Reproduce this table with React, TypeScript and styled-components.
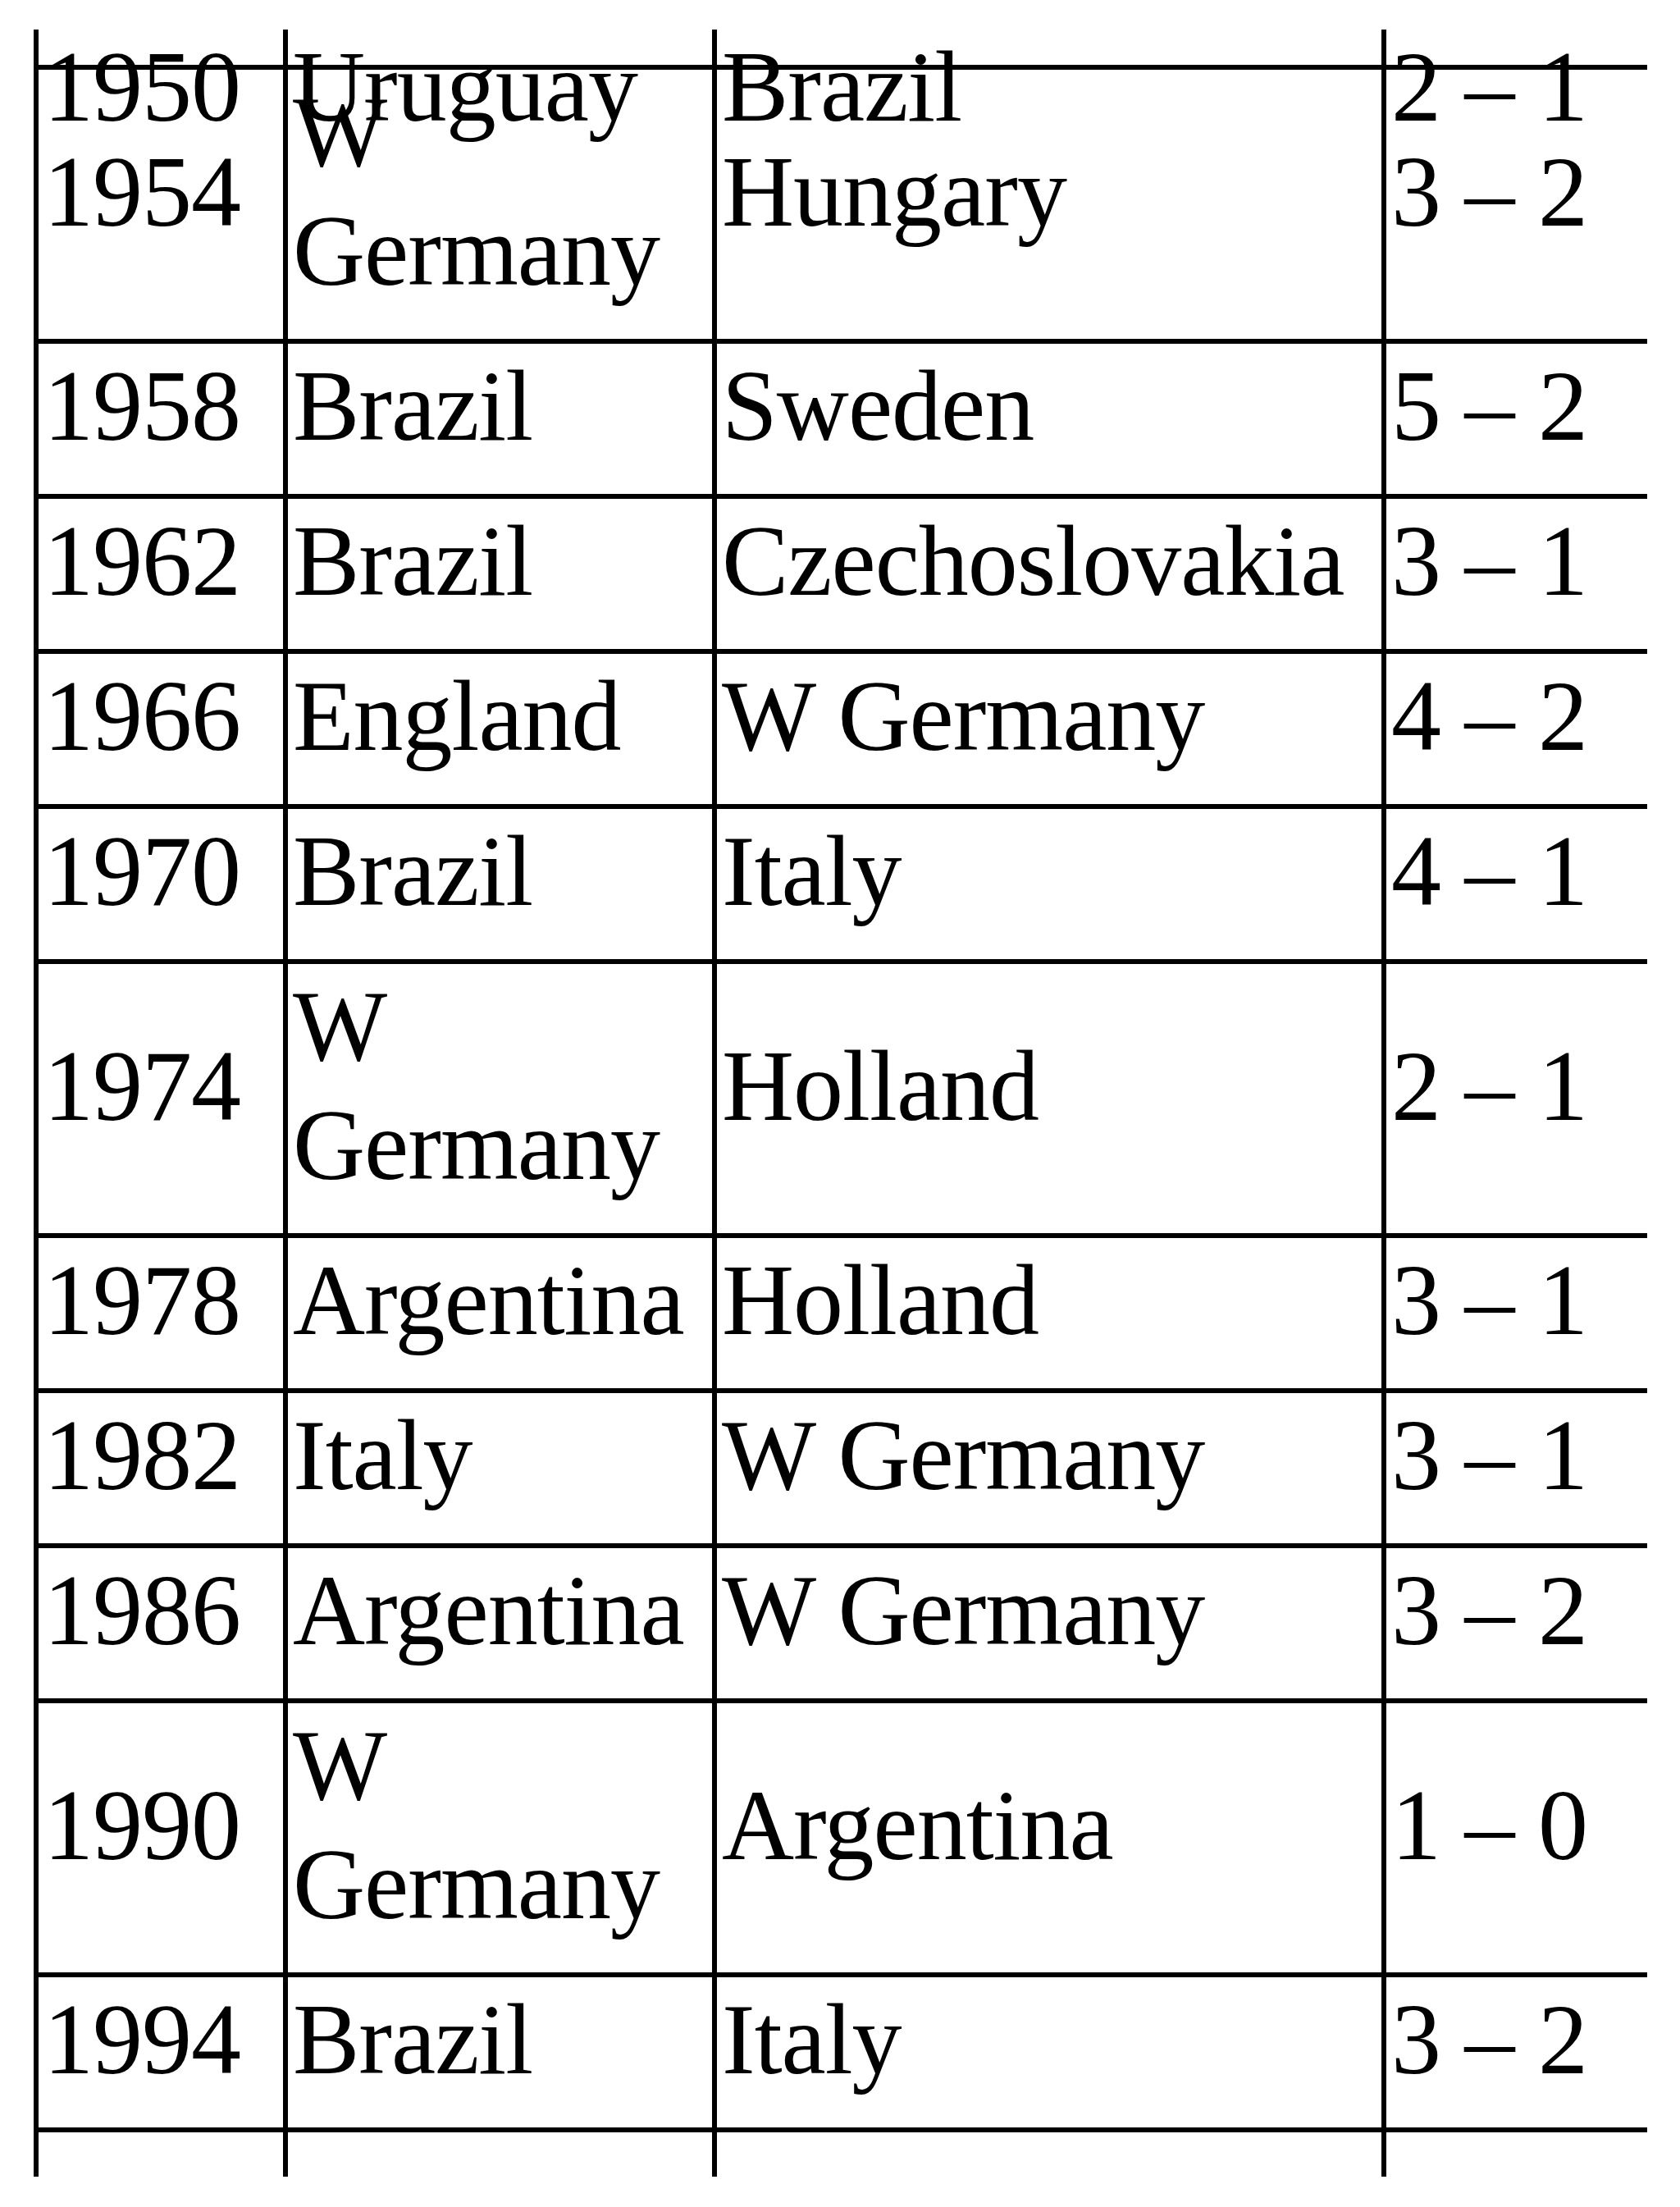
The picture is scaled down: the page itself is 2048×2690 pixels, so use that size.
import React from "react";
import styled, { createGlobalStyle } from "styled-components";

const Global = createGlobalStyle`
  html, body {
    margin: 0;
    padding: 0;
    background: #ffffff;
  }
  * { box-sizing: border-box; }
`;

const Page = styled.div`
  padding: 36px 0 0 41px;
  min-height: 2690px;
  background: #ffffff;
  color: #000000;
  font-family: "Liberation Serif", "Times New Roman", Times, serif;
  font-size: 122px;
  letter-spacing: -1px;
`;

const Table = styled.div`
  width: 1967px;
  display: flex;
  flex-direction: column;
`;

const Body = styled.div`
  display: flex;
  flex-direction: column;
  border-bottom: 6px solid #000;
`;

const Row = styled.div<{ $cap?: "top" | "bottom" }>`
  display: grid;
  grid-template-columns: 304px 523px 816px 324px;
  border-top: ${(p) => (p.$cap ? "0" : "6px solid #000")};
  height: ${(p) => (p.$cap === "top" ? "43px" : p.$cap === "bottom" ? "54px" : "auto")};
`;

const Cell = styled.div<{ $cap?: boolean }>`
  display: flex;
  align-items: ${(p) => (p.$cap ? "flex-start" : "center")};
  border-left: 6px solid #000;
  padding: ${(p) => (p.$cap ? "0 6px" : "3px 6px 35px 6px")};
  line-height: 145px;
  min-width: 0;
  overflow: visible;
`;

const CellText = styled.div<{ $cap?: boolean }>`
  margin-top: ${(p) => (p.$cap ? "-3px" : "0")};
  white-space: normal;
`;

const first = ["1950", "Uruguay", "Brazil", "2 – 1"];

const rows: string[][] = [
  ["1954", "W Germany", "Hungary", "3 – 2"],
  ["1958", "Brazil", "Sweden", "5 – 2"],
  ["1962", "Brazil", "Czechoslovakia", "3 – 1"],
  ["1966", "England", "W Germany", "4 – 2"],
  ["1970", "Brazil", "Italy", "4 – 1"],
  ["1974", "W Germany", "Holland", "2 – 1"],
  ["1978", "Argentina", "Holland", "3 – 1"],
  ["1982", "Italy", "W Germany", "3 – 1"],
  ["1986", "Argentina", "W Germany", "3 – 2"],
  ["1990", "W Germany", "Argentina", "1 – 0"],
  ["1994", "Brazil", "Italy", "3 – 2"],
];

export default function App() {
  return (
    <>
      <Global />
      <Page>
        <Table>
          <Row $cap="top">
            {first.map((t, i) => (
              <Cell key={i} $cap>
                <CellText $cap>{t}</CellText>
              </Cell>
            ))}
          </Row>
          <Body>
            {rows.map((r) => (
              <Row key={r[0]}>
                {r.map((t, i) => (
                  <Cell key={i}>
                    <CellText>{t}</CellText>
                  </Cell>
                ))}
              </Row>
            ))}
          </Body>
          <Row $cap="bottom">
            {[0, 1, 2, 3].map((i) => (
              <Cell key={i} $cap />
            ))}
          </Row>
        </Table>
      </Page>
    </>
  );
}
